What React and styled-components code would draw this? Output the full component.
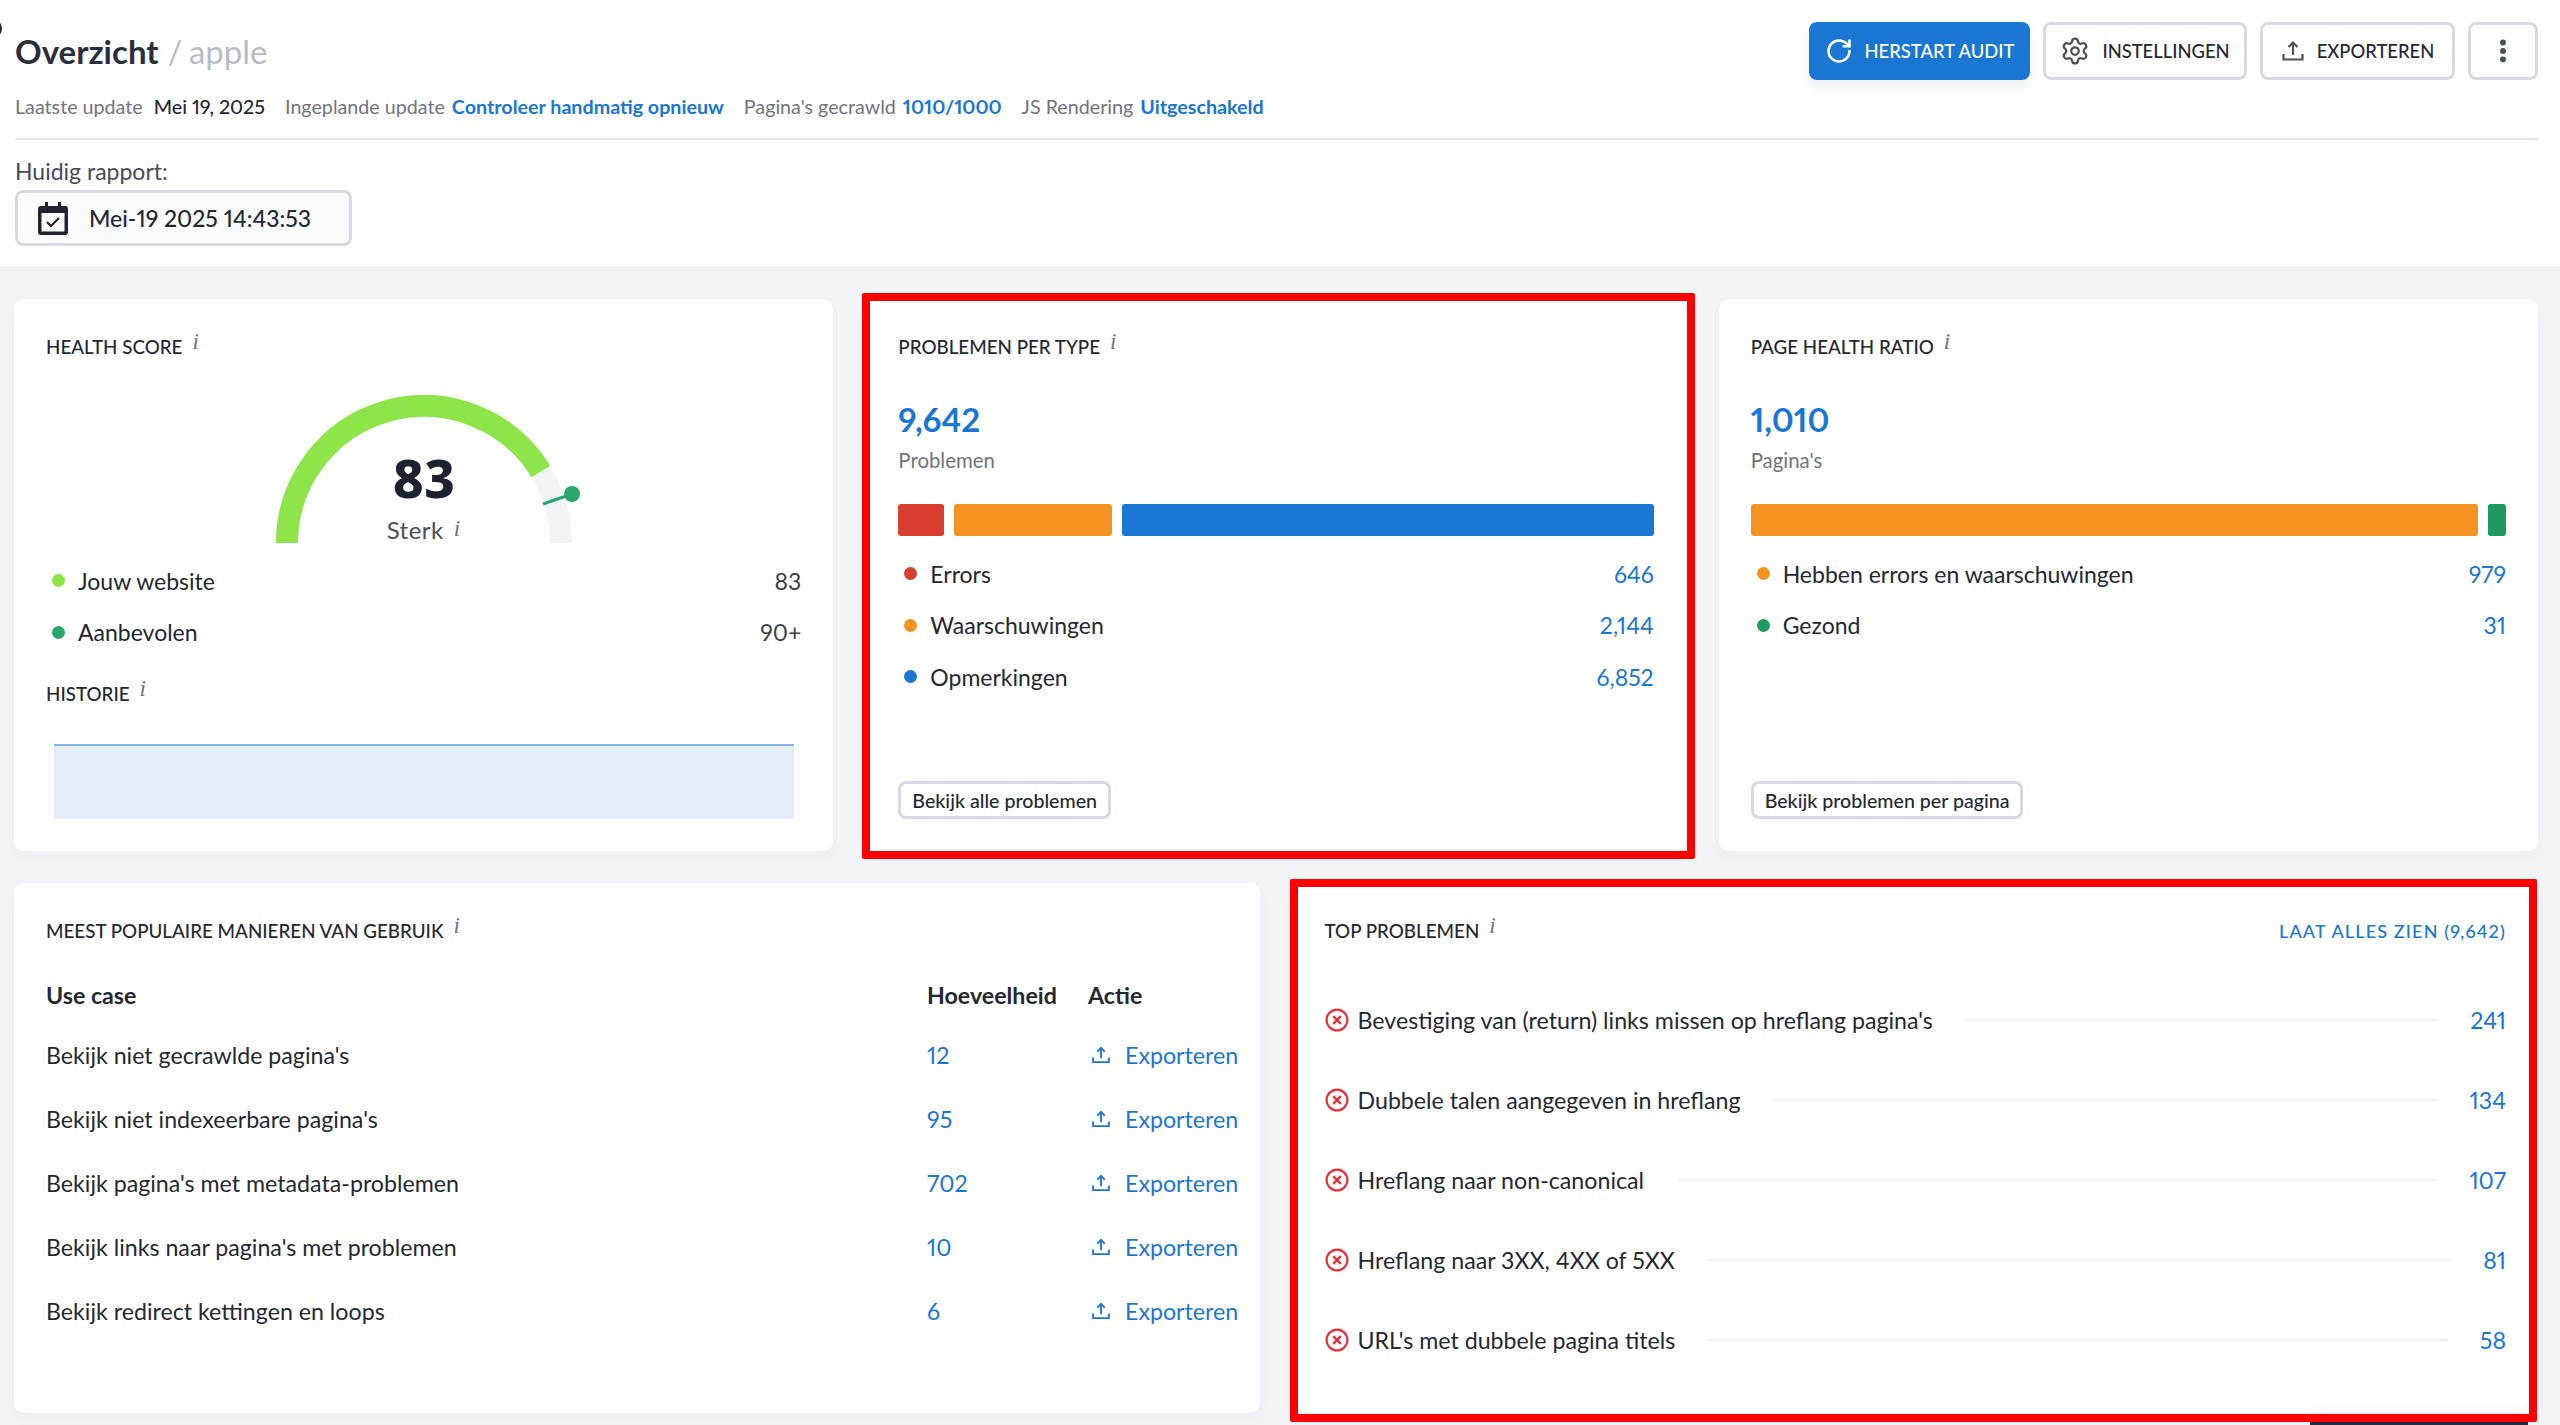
import React from 'react';
import styled, { createGlobalStyle } from 'styled-components';
import { RotateCw, Settings } from 'lucide-react';

const blue = '#1976d2';
const dark = '#232833';
const line = '#d6dae6';

const GlobalStyle = createGlobalStyle`
  html, body {
    margin: 0;
    height: 1425px;
    overflow: hidden;
    background: #f3f4f8;
    font-family: Lato, "Noto Sans", "Liberation Sans", sans-serif;
    font-variant-numeric: proportional-nums;
    color: ${dark};
  }
  * { box-sizing: border-box; }
`;

const Corner = styled.span`
  position: absolute;
  left: -14px;
  top: 20px;
  width: 16px;
  height: 17px;
  border: 2px solid ${dark};
  border-radius: 50%;
`;

const Head = styled.header`
  background: #fff;
  height: 266px;
  padding: 22px 22px 0 15px;
`;

const TopRow = styled.div`
  display: flex;
  justify-content: space-between;
  align-items: center;
  height: 58px;
`;

const Title = styled.h1`
  margin: 0;
  font-size: 33px;
  font-weight: 700;
  color: #2a2f3b;
  span {
    font-weight: 400;
    color: #b8bcc7;
    margin-left: 9px;
    word-spacing: -2px;
  }
`;

const Actions = styled.div`
  display: flex;
  gap: 13px;
`;

const ActionButton = styled.button`
  display: flex;
  align-items: center;
  justify-content: center;
  gap: 12px;
  height: 58px;
  width: ${p => p.$w}px;
  border-radius: 8px;
  border: ${p => (p.$primary ? 'none' : `3px solid ${line}`)};
  background: ${p => (p.$primary ? blue : '#fff')};
  color: ${p => (p.$primary ? '#fff' : dark)};
  box-shadow: ${p => (p.$primary ? '0 8px 14px rgba(40,60,110,.08)' : 'none')};
  font: 500 18.4px Lato, sans-serif;
  svg { color: ${p => (p.$primary ? '#fff' : '#4b505b')}; }
`;

const Meta = styled.div`
  display: flex;
  align-items: flex-start;
  height: 46px;
  margin-top: 14px;
  border-bottom: 2px solid #e3e6ee;
  font-size: 19.7px;
  line-height: 26px;
  color: #70757f;
`;

const MetaGroup = styled.span`
  margin-right: 20px;
  display: inline-flex;
  gap: ${p => (p.$wide ? 11 : 7)}px;
`;

const MetaValue = styled.b`
  font-weight: 500;
  color: ${dark};
`;

const MetaLink = styled.b`
  font-weight: 700;
  color: ${blue};
`;

const ReportLabel = styled.div`
  font-size: 23px;
  line-height: 28px;
  color: #474c57;
  margin-top: 17px;
  margin-bottom: 5px;
`;

const DateBox = styled.div`
  display: flex;
  align-items: center;
  gap: 21px;
  width: 337px;
  height: 56px;
  padding-left: 20px;
  border: 3px solid ${line};
  border-radius: 8px;
  background: #fafbfd;
  font-size: 23px;
  font-weight: 500;
`;

const Main = styled.main`
  padding: 33px 22px 0 14px;
  display: grid;
  gap: 32px;
  grid-template-rows: 552px 530px;
`;

const TopCards = styled.div`
  display: grid;
  grid-template-columns: repeat(3, 1fr);
  gap: 33px;
`;

const BottomCards = styled.div`
  display: grid;
  grid-template-columns: repeat(2, 1fr);
  gap: 33px;
`;

const Card = styled.section`
  position: relative;
  display: flex;
  flex-direction: column;
  padding: 34px 32px 32px;
  background: #fff;
  border-radius: 10px;
  box-shadow: 0 6px 14px rgba(60,70,110,.03);
`;

const Marked = styled.div`
  position: absolute;
  z-index: 3;
  pointer-events: none;
  top: ${p => p.$t}px;
  left: ${p => p.$l}px;
  right: ${p => p.$r}px;
  bottom: ${p => p.$b}px;
  border: 8px solid #ff0000;
  border-radius: 2px;
`;

const CardHead = styled.div`
  display: flex;
  align-items: center;
  justify-content: space-between;
  height: 28px;
`;

const CardTitle = styled.h2`
  margin: 0;
  display: flex;
  align-items: center;
  padding-bottom: 2px;
  font-size: 18.8px;
  font-weight: 500;
  color: #232833;
`;

const Info = styled.i`
  font-family: "Liberation Serif", serif;
  font-size: ${p => p.$size || 23}px;
  font-weight: 400;
  color: #6d7280;
  margin-left: ${p => p.$gap || 10}px;
  margin-bottom: ${p => p.$up ?? 8}px;
`;

const AllLink = styled.a`
  font-size: 18px;
  font-weight: 500;
  letter-spacing: 1.15px;
  color: ${blue};
`;

const Gauge = styled.div`
  position: relative;
  align-self: center;
  width: 320px;
  height: 148px;
  margin-top: 34px;
  svg { display: block; }
`;

const GaugeText = styled.div`
  position: absolute;
  left: 0;
  right: 0;
  bottom: 0;
  text-align: center;
`;

const Score = styled.div`
  font-family: "Noto Sans", sans-serif;
  font-size: 53px;
  font-weight: 800;
  line-height: 62px;
  color: #1d2230;
`;

const ScoreLabel = styled.div`
  display: flex;
  justify-content: center;
  align-items: center;
  height: 30px;
  margin-top: 4px;
  padding-top: 2px;
  font-size: 24px;
  letter-spacing: .5px;
  color: #4a4f5a;
`;

const Legend = styled.div`
  margin-top: 12px;
`;

const LegendRow = styled.div`
  display: flex;
  align-items: center;
  height: 51.5px;
  padding-left: 6px;
  font-size: 23px;
`;

const Dot = styled.span`
  width: 13px;
  height: 13px;
  border-radius: 50%;
  background: ${p => p.$c};
  margin-right: 13px;
`;

const LegendValue = styled.span`
  margin-left: auto;
  color: ${p => (p.$plain ? '#3a3f4a' : blue)};
`;

const HistoryHead = styled(CardHead)`
  margin-top: 22px;
`;

const HistoryChart = styled.div`
  height: 75px;
  margin: 36px 7px 0 8px;
  background: #e4eefa;
  border-top: 2px solid #82b5ea;
`;

const BigNumber = styled.div`
  margin-top: 36px;
  font-size: 33px;
  font-weight: 700;
  line-height: 44px;
  color: ${blue};
`;

const Sub = styled.div`
  margin-top: 5px;
  font-size: 20.4px;
  line-height: 28px;
  color: #6f747e;
`;

const Bars = styled.div`
  display: flex;
  gap: 10px;
  margin-top: 30px;
`;

const Bar = styled.div`
  height: 32px;
  border-radius: 3px;
  background: ${p => p.$c};
  width: ${p => p.$w}px;
  flex: ${p => (p.$grow ? 1 : 'none')};
`;

const OutlineButton = styled.button`
  align-self: flex-start;
  margin-top: auto;
  height: 38px;
  padding: 0 11px;
  border: 3px solid ${line};
  border-radius: 8px;
  background: #fff;
  font: 500 19.6px Lato, sans-serif;
  color: #232833;
`;

const TableGrid = styled.div`
  display: grid;
  grid-template-columns: 881px 161px 1fr;
  align-items: center;
  margin-right: -12px;
  height: ${p => (p.$head ? 30 : 64)}px;
  margin-top: ${p => (p.$head ? 35 : 0)}px;
  margin-bottom: ${p => (p.$head ? 13 : 0)}px;
  font-size: 23.2px;
  font-weight: ${p => (p.$head ? 700 : 400)};
`;

const Count = styled.span`
  color: ${blue};
`;

const ExportLink = styled.a`
  display: flex;
  align-items: center;
  gap: 14px;
  padding-left: 3px;
  color: ${blue};
`;

const Problems = styled.div`
  margin-top: 35px;
`;

const ProblemRow = styled.div`
  display: flex;
  align-items: center;
  height: 80px;
  font-size: 23.2px;
  gap: 33px;
`;

const ProblemName = styled.span`
  display: flex;
  align-items: center;
  gap: 9px;
`;

const Rule = styled.span`
  flex: 1;
  height: 2px;
  background: #eff1f5;
`;

const BottomTab = styled.div`
  position: absolute;
  z-index: 2;
  left: 1017px;
  right: 10px;
  bottom: -12px;
  height: 3px;
  background: #23283a;
  box-shadow: 0 -8px 18px rgba(60,70,110,.1);
`;

const UploadIcon = ({ size = 24 }) => (
  <svg width={size} height={size} viewBox="0 0 24 24" fill="none" stroke="currentColor" strokeWidth="2.2">
    <path d="M12 16V3.5M7.5 8 12 3.5 16.5 8" />
    <path d="M2.5 15v5.5h19V15" />
  </svg>
);

const CalendarIcon = () => (
  <svg width="30" height="33" viewBox="0 0 30 33" fill="none">
    <path d="M7 0h3v4h10V0h3v4h4a3 3 0 0 1 3 3v23a3 3 0 0 1-3 3H3a3 3 0 0 1-3-3V7a3 3 0 0 1 3-3h4z" fill="#1f2430" />
    <rect x="3.5" y="11" width="23" height="18.5" fill="#fafbfd" />
    <path d="m9 20 4 4 8-8" stroke="#1f2430" strokeWidth="2.2" />
  </svg>
);

const DotsIcon = () => (
  <svg width="8" height="24" viewBox="0 0 8 24" fill="#4b505b">
    <circle cx="4" cy="3.5" r="3" />
    <circle cx="4" cy="12" r="3" />
    <circle cx="4" cy="20.5" r="3" />
  </svg>
);

const ErrorIcon = () => (
  <svg width="24" height="24" viewBox="0 0 24 24" fill="none" stroke="#e5323b" strokeWidth="2.2">
    <circle cx="12" cy="12" r="10.4" />
    <path d="m8.2 8.2 7.6 7.6m0-7.6-7.6 7.6" strokeWidth="2.4" />
  </svg>
);

// half circle gauge, centre of the arc is at 160,148
const GaugeArc = () => (
  <svg width="320" height="148" viewBox="0 0 320 148" fill="none">
    <path d="M23 148A137 137 0 0 1 297 148" stroke="#f2f4f8" strokeWidth="22" />
    <path d="M23 148A137 137 0 0 1 276.8 76.4" stroke="#8ee549" strokeWidth="22" />
    <path d="M279 109 308 99" stroke="#2aa76c" strokeWidth="3" />
    <circle cx="308" cy="99" r="8" fill="#2aa76c" />
  </svg>
);

const useCases = [
  ['Bekijk niet gecrawlde pagina\'s', 12],
  ['Bekijk niet indexeerbare pagina\'s', 95],
  ['Bekijk pagina\'s met metadata-problemen', 702],
  ['Bekijk links naar pagina\'s met problemen', 10],
  ['Bekijk redirect kettingen en loops', 6],
];

const topIssues = [
  ['Bevestiging van (return) links missen op hreflang pagina\'s', 241],
  ['Dubbele talen aangegeven in hreflang', 134],
  ['Hreflang naar non-canonical', 107],
  ['Hreflang naar 3XX, 4XX of 5XX', 81],
  ['URL\'s met dubbele pagina titels', 58],
];

export default function App() {
  return (
    <>
      <GlobalStyle />
      <Corner />
      <Head>
        <TopRow>
          <Title>Overzicht<span>/ apple</span></Title>
          <Actions>
            <ActionButton $primary $w={221}><RotateCw size={28} strokeWidth={2.2} />HERSTART AUDIT</ActionButton>
            <ActionButton $w={204}><Settings size={30} strokeWidth={1.8} />INSTELLINGEN</ActionButton>
            <ActionButton $w={195}><UploadIcon />EXPORTEREN</ActionButton>
            <ActionButton $w={70}><DotsIcon /></ActionButton>
          </Actions>
        </TopRow>
        <Meta>
          <MetaGroup $wide>Laatste update <MetaValue>Mei 19, 2025</MetaValue></MetaGroup>
          <MetaGroup>Ingeplande update <MetaLink>Controleer handmatig opnieuw</MetaLink></MetaGroup>
          <MetaGroup>Pagina's gecrawld <MetaLink>1010/1000</MetaLink></MetaGroup>
          <MetaGroup>JS Rendering <MetaLink>Uitgeschakeld</MetaLink></MetaGroup>
        </Meta>
        <ReportLabel>Huidig rapport:</ReportLabel>
        <DateBox><CalendarIcon />Mei-19 2025 14:43:53</DateBox>
      </Head>

      <Main>
        <TopCards>
          <Card>
            <CardHead><CardTitle>HEALTH SCORE<Info>i</Info></CardTitle></CardHead>
            <Gauge>
              <GaugeArc />
              <GaugeText>
                <Score>83</Score>
                <ScoreLabel>Sterk<Info $up={0}>i</Info></ScoreLabel>
              </GaugeText>
            </Gauge>
            <Legend>
              <LegendRow><Dot $c="#8ee549" />Jouw website<LegendValue $plain>83</LegendValue></LegendRow>
              <LegendRow><Dot $c="#2aa76c" />Aanbevolen<LegendValue $plain>90+</LegendValue></LegendRow>
            </Legend>
            <HistoryHead><CardTitle>HISTORIE<Info>i</Info></CardTitle></HistoryHead>
            <HistoryChart />
          </Card>

          <Card>
            <CardHead><CardTitle>PROBLEMEN PER TYPE<Info>i</Info></CardTitle></CardHead>
            <BigNumber>9,642</BigNumber>
            <Sub>Problemen</Sub>
            <Bars>
              <Bar $c="#d93d30" $w={46} />
              <Bar $c="#f59322" $w={158} />
              <Bar $c={blue} $grow />
            </Bars>
            <Legend>
              <LegendRow><Dot $c="#d93d30" />Errors<LegendValue>646</LegendValue></LegendRow>
              <LegendRow><Dot $c="#f59322" />Waarschuwingen<LegendValue>2,144</LegendValue></LegendRow>
              <LegendRow><Dot $c={blue} />Opmerkingen<LegendValue>6,852</LegendValue></LegendRow>
            </Legend>
            <OutlineButton>Bekijk alle problemen</OutlineButton>
            <Marked $t={-6} $l={-4} $r={-9} $b={-8} />
          </Card>

          <Card>
            <CardHead><CardTitle>PAGE HEALTH RATIO<Info>i</Info></CardTitle></CardHead>
            <BigNumber>1,010</BigNumber>
            <Sub>Pagina's</Sub>
            <Bars>
              <Bar $c="#f59322" $grow />
              <Bar $c="#1f9a5f" $w={18} />
            </Bars>
            <Legend>
              <LegendRow><Dot $c="#f59322" />Hebben errors en waarschuwingen<LegendValue>979</LegendValue></LegendRow>
              <LegendRow><Dot $c="#1f9a5f" />Gezond<LegendValue>31</LegendValue></LegendRow>
            </Legend>
            <OutlineButton>Bekijk problemen per pagina</OutlineButton>
          </Card>
        </TopCards>

        <BottomCards>
          <Card>
            <CardHead><CardTitle>MEEST POPULAIRE MANIEREN VAN GEBRUIK<Info>i</Info></CardTitle></CardHead>
            <TableGrid $head><span>Use case</span><span>Hoeveelheid</span><span>Actie</span></TableGrid>
            {useCases.map(([name, count]) => (
              <TableGrid key={name}>
                <span>{name}</span>
                <Count>{count}</Count>
                <ExportLink><UploadIcon size={20} />Exporteren</ExportLink>
              </TableGrid>
            ))}
          </Card>

          <Card>
            <CardHead>
              <CardTitle>TOP PROBLEMEN<Info>i</Info></CardTitle>
              <AllLink>LAAT ALLES ZIEN (9,642)</AllLink>
            </CardHead>
            <Problems>
              {topIssues.map(([name, count]) => (
                <ProblemRow key={name}>
                  <ProblemName><ErrorIcon />{name}</ProblemName>
                  <Rule />
                  <Count>{count}</Count>
                </ProblemRow>
              ))}
            </Problems>
            <BottomTab />
            <Marked $t={-4} $l={-3} $r={1} $b={-9} />
          </Card>
        </BottomCards>
      </Main>
    </>
  );
}
